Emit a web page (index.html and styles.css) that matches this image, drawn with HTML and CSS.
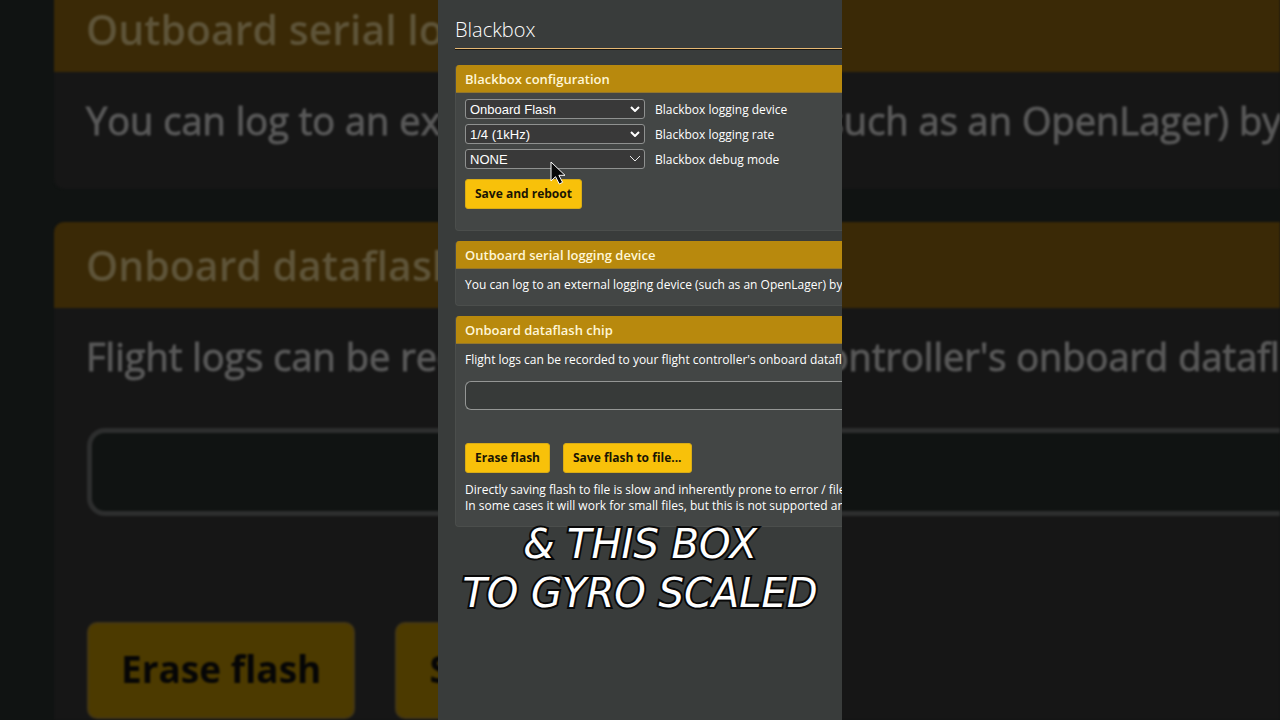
FILE: index.html
```html
<!DOCTYPE html>
<html lang="en">
<head>
<meta charset="utf-8">
<title>Blackbox</title>
<link rel="stylesheet" href="styles.css">
</head>
<body>
<div class="stage">
  <div class="backdrop" aria-hidden="true">
    <div class="big-panel">
      <div class="big-title">Outboard serial logging device</div>
      <p class="big-text">You can log to an external logging device (such as an OpenLager) by</p>
    </div>
    <div class="big-panel">
      <div class="big-title">Onboard dataflash chip</div>
      <p class="big-text">Flight logs can be recorded to your flight controller's onboard dataflash</p>
      <div class="big-meter"></div>
      <div class="big-actions">
        <button class="big-button" type="button" tabindex="-1">Erase flash</button>
        <button class="big-button" type="button" tabindex="-1">Save flash to file...</button>
      </div>
    </div>
  </div>

  <main class="screen">
    <h1 class="page-title">Blackbox</h1>

    <section class="panel config">
      <h2 class="panel-title">Blackbox configuration</h2>
      <div class="fields">
        <div class="field">
          <span class="picker">
            <select id="device" class="select"><option>Onboard Flash</option></select>
            <svg class="chevron bold" viewBox="0 0 10 6"><path d="M1 1l4 4 4-4"/></svg>
          </span>
          <label for="device">Blackbox logging device</label>
        </div>
        <div class="field">
          <span class="picker">
            <select id="rate" class="select"><option>1/4 (1kHz)</option></select>
            <svg class="chevron bold" viewBox="0 0 10 6"><path d="M1 1l4 4 4-4"/></svg>
          </span>
          <label for="rate">Blackbox logging rate</label>
        </div>
        <div class="field">
          <span class="picker">
            <select id="debug" class="select"><option>NONE</option></select>
            <svg class="chevron" viewBox="0 0 10 6"><path d="M0 0l5 5 5-5"/></svg>
          </span>
          <label for="debug">Blackbox debug mode</label>
        </div>
      </div>
      <button class="button" type="button">Save and reboot</button>
    </section>

    <section class="panel serial">
      <h2 class="panel-title">Outboard serial logging device</h2>
      <p class="text">You can log to an external logging device (such as an OpenLager) by</p>
    </section>

    <section class="panel flash">
      <h2 class="panel-title">Onboard dataflash chip</h2>
      <p class="text">Flight logs can be recorded to your flight controller's onboard dataflash</p>
      <div class="meter"></div>
      <div class="actions">
        <button class="button" type="button">Erase flash</button>
        <button class="button" type="button">Save flash to file...</button>
      </div>
      <p class="text">Directly saving flash to file is slow and inherently prone to error / file<br>In some cases it will work for small files, but this is not supported and</p>
    </section>

    <p class="caption">&amp; THIS BOX<br>TO GYRO SCALED</p>
    <svg class="cursor" viewBox="0 0 16 24"><path d="M1 1v19l4.500-4.300 3.800 7.300 3.300-1.700-3.700-7H15z"/></svg>
  </main>
</div>
</body>
</html>
```
FILE: styles.css
```css
* { box-sizing: border-box; }

body {
  margin: 0;
  background: #101312;
  font-family: "Open Sans", "Noto Sans", sans-serif;
}

h1, h2, p { margin: 0; }

.stage {
  position: relative;
  display: flex;
  justify-content: center;
  height: 100vh;
  overflow: hidden;
}

/* Enlarged, dimmed copy behind the video */
.backdrop {
  position: absolute;
  inset: 0;
  display: flex;
  flex-direction: column;
  gap: 33px;
  margin-top: -14px;
  padding-left: 54px;
  overflow: hidden;
  color: #585858;
  white-space: nowrap;
  filter: blur(1px);
}

.big-panel {
  flex: none;
  min-height: 203px;
  border-radius: 10px 0 0 10px;
  background: #161616;
  overflow: hidden;
}

.big-title {
  height: 86px;
  padding-left: 32px;
  background: #3a2906;
  color: #5e5439;
  font-size: 41px;
  font-weight: 600;
  line-height: 86px;
}

.big-text {
  padding: 22px 0 0 32px;
  font-size: 38px;
  line-height: 52px;
  -webkit-text-stroke: 1px #585858;
}

.big-meter {
  height: 88px;
  margin: 46px 0 106px 33px;
  border: 5px solid #2d2e2e;
  border-right: 0;
  border-radius: 18px 0 0 18px;
  background: #101312;
}

.big-actions {
  display: flex;
  gap: 40px;
  padding: 0 0 40px 33px;
}

.big-button {
  height: 97px;
  padding: 0 32px 4px;
  border: 2px solid #443714;
  border-radius: 10px;
  background: #4c3a00;
  color: #060606;
  font: 700 37px "Open Sans", sans-serif;
}

/* Portrait video frame */
.screen {
  position: relative;
  height: 100%;
  aspect-ratio: 101 / 180;
  padding-left: 17px;
  background: #393c3b;
  color: #fff;
  font-size: 12px;
  white-space: nowrap;
  overflow: hidden;
}

.page-title {
  height: 49px;
  margin-bottom: 16px;
  padding-top: 16px;
  border-bottom: 1px solid #e5b874;
  box-shadow: 0 1px 0 #191611;
  font-size: 20px;
  font-weight: 300;
  line-height: 28px;
}

.panel {
  margin-bottom: 10px;
  border: 1px solid #4b4e4c;
  border-width: 0 0 1px 1px;
  border-radius: 4px 0 0 4px;
  background: #434645;
  overflow: hidden;
}

.config { height: 166px; }
.serial { height: 65px; }
.flash { height: 211px; }

.panel-title {
  padding: 1px 0 0 9px;
  border-bottom: 1px solid #94762b;
  background: #b8890d;
  color: #fff6d6;
  font-size: 13px;
  font-weight: 600;
  line-height: 26px;
}

.fields {
  display: grid;
  gap: 5px;
  padding: 6px 0 10px 9px;
}

.field {
  display: flex;
  align-items: center;
  gap: 10px;
  height: 20px;
}

.picker {
  position: relative;
  width: 180px;
}

.select {
  display: block;
  width: 100%;
  height: 20px;
  padding: 0 4px;
  border: 1px solid #8f9190;
  border-radius: 3px;
  background: #393939;
  color: #fff;
  font: 13px "Liberation Sans", Arial, sans-serif;
  appearance: none;
}

.chevron {
  position: absolute;
  top: 7px;
  right: 5px;
  width: 10px;
  height: 6px;
  fill: none;
  stroke: #e8e8e8;
  stroke-width: 1;
  pointer-events: none;
}

.bold {
  stroke: #fff;
  stroke-width: 2;
}

.button {
  height: 30px;
  padding: 0 9px 1px;
  border: 1px solid #d8ab16;
  border-radius: 3px;
  background: #f8c10a;
  color: #1a1503;
  font: 700 12px "Open Sans", sans-serif;
}

.config .button { margin-left: 9px; }

.text {
  padding: 8px 0 0 9px;
  line-height: 16px;
}

.meter {
  height: 29px;
  margin: 13px 0 33px 9px;
  border: 1px solid #949695;
  border-right: 0;
  border-radius: 6px 0 0 6px;
  background: #373a39;
}

.actions {
  display: flex;
  gap: 13px;
  padding: 0 0 1px 9px;
}

.caption {
  position: absolute;
  top: 520px;
  left: 0;
  width: 100%;
  color: #fff;
  font-family: "DejaVu Sans", sans-serif;
  font-size: 40px;
  font-style: italic;
  line-height: 49px;
  text-align: center;
  -webkit-text-stroke: 4px #080808;
  paint-order: stroke fill;
}

.cursor {
  position: absolute;
  top: 161px;
  left: 112px;
  width: 16px;
  height: 24px;
  fill: #080808;
  stroke: #fff;
  stroke-width: 1;
}
```
